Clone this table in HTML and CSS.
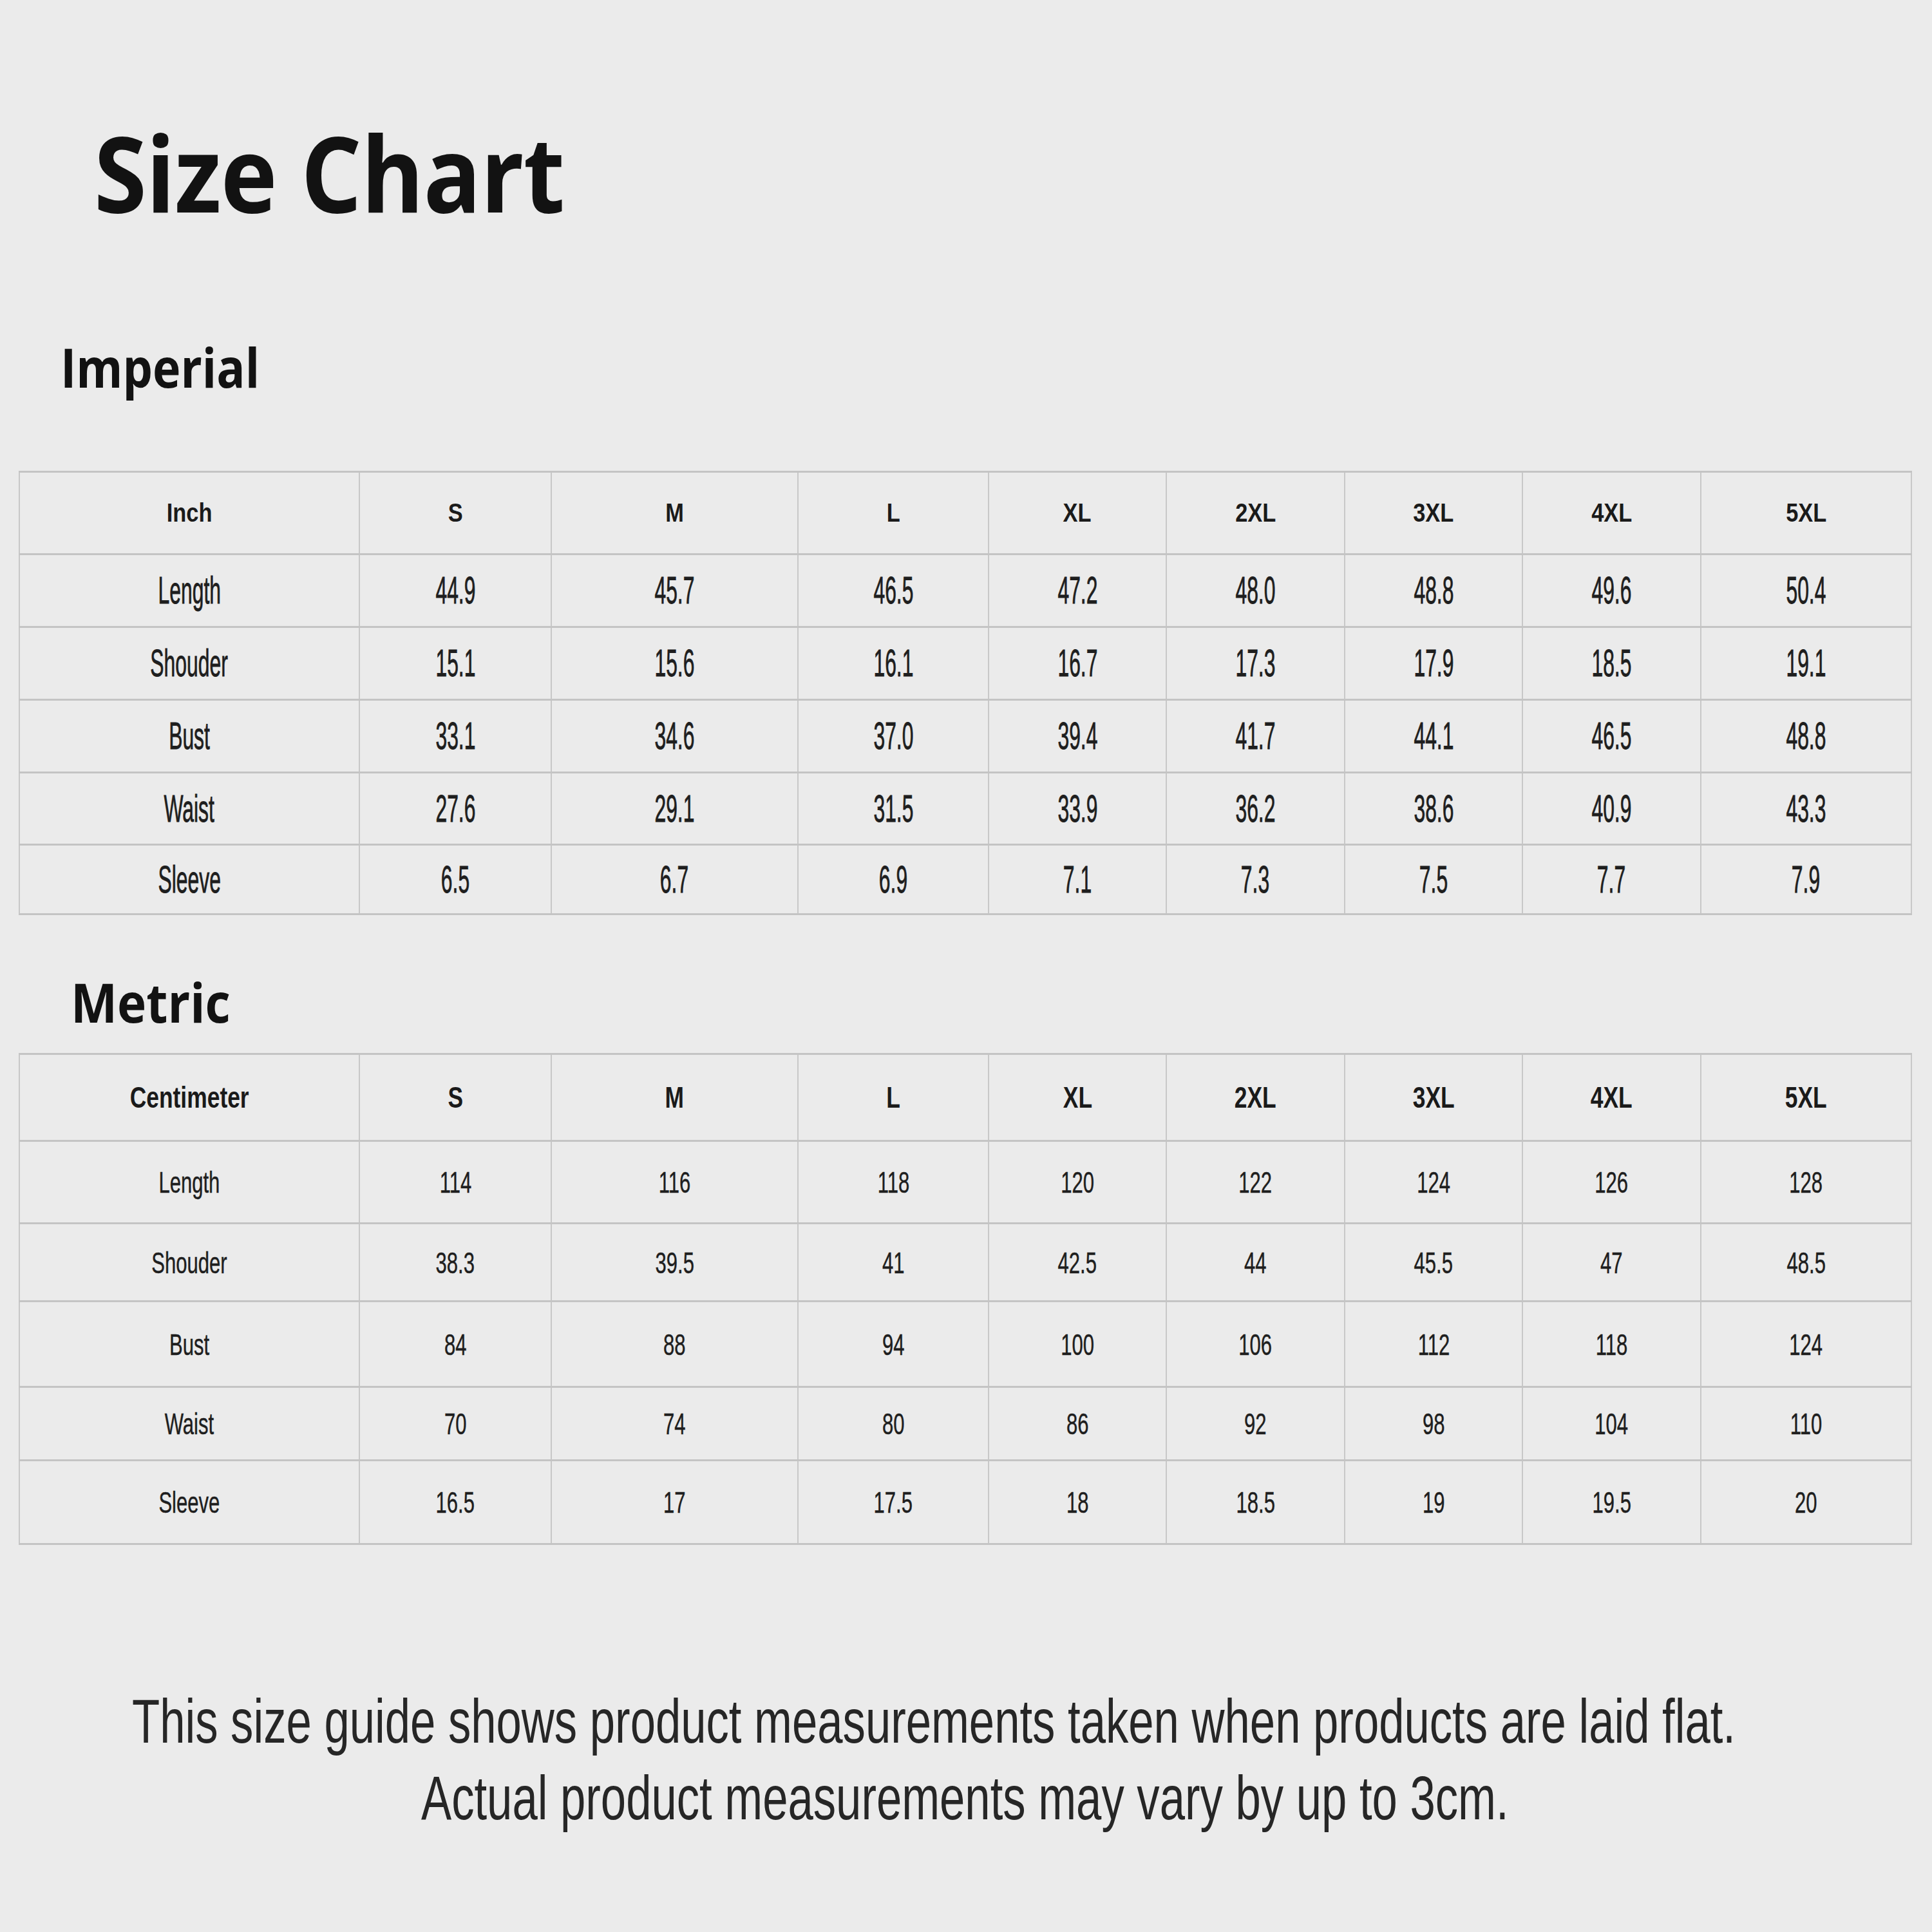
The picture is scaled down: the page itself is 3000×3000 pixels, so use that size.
FILE: index.html
```html
<!DOCTYPE html>
<html lang="en">
<head>
<meta charset="utf-8">
<title>Size Chart</title>
<link rel="stylesheet" href="styles.css">
</head>
<body>
<main class="page">
  <h1 class="title"><span>Size Chart</span></h1>

  <h2 class="section imperial"><span>Imperial</span></h2>
  <table class="chart chart-in">
    <colgroup>
      <col class="c0"><col class="c1"><col class="c2"><col class="c3"><col class="c4"><col class="c5"><col class="c6"><col class="c7"><col class="c8">
    </colgroup>
    <thead>
      <tr class="r-h">
        <th><span>Inch</span></th><th><span>S</span></th><th><span>M</span></th><th><span>L</span></th><th><span>XL</span></th><th><span>2XL</span></th><th><span>3XL</span></th><th><span>4XL</span></th><th><span>5XL</span></th>
      </tr>
    </thead>
    <tbody>
      <tr class="r1"><td><span>Length</span></td><td><span>44.9</span></td><td><span>45.7</span></td><td><span>46.5</span></td><td><span>47.2</span></td><td><span>48.0</span></td><td><span>48.8</span></td><td><span>49.6</span></td><td><span>50.4</span></td></tr>
      <tr class="r2"><td><span>Shouder</span></td><td><span>15.1</span></td><td><span>15.6</span></td><td><span>16.1</span></td><td><span>16.7</span></td><td><span>17.3</span></td><td><span>17.9</span></td><td><span>18.5</span></td><td><span>19.1</span></td></tr>
      <tr class="r3"><td><span>Bust</span></td><td><span>33.1</span></td><td><span>34.6</span></td><td><span>37.0</span></td><td><span>39.4</span></td><td><span>41.7</span></td><td><span>44.1</span></td><td><span>46.5</span></td><td><span>48.8</span></td></tr>
      <tr class="r4"><td><span>Waist</span></td><td><span>27.6</span></td><td><span>29.1</span></td><td><span>31.5</span></td><td><span>33.9</span></td><td><span>36.2</span></td><td><span>38.6</span></td><td><span>40.9</span></td><td><span>43.3</span></td></tr>
      <tr class="r5"><td><span>Sleeve</span></td><td><span>6.5</span></td><td><span>6.7</span></td><td><span>6.9</span></td><td><span>7.1</span></td><td><span>7.3</span></td><td><span>7.5</span></td><td><span>7.7</span></td><td><span>7.9</span></td></tr>
    </tbody>
  </table>

  <h2 class="section metric"><span>Metric</span></h2>
  <table class="chart chart-cm">
    <colgroup>
      <col class="c0"><col class="c1"><col class="c2"><col class="c3"><col class="c4"><col class="c5"><col class="c6"><col class="c7"><col class="c8">
    </colgroup>
    <thead>
      <tr class="r-h">
        <th><span>Centimeter</span></th><th><span>S</span></th><th><span>M</span></th><th><span>L</span></th><th><span>XL</span></th><th><span>2XL</span></th><th><span>3XL</span></th><th><span>4XL</span></th><th><span>5XL</span></th>
      </tr>
    </thead>
    <tbody>
      <tr class="r1"><td><span>Length</span></td><td><span>114</span></td><td><span>116</span></td><td><span>118</span></td><td><span>120</span></td><td><span>122</span></td><td><span>124</span></td><td><span>126</span></td><td><span>128</span></td></tr>
      <tr class="r2"><td><span>Shouder</span></td><td><span>38.3</span></td><td><span>39.5</span></td><td><span>41</span></td><td><span>42.5</span></td><td><span>44</span></td><td><span>45.5</span></td><td><span>47</span></td><td><span>48.5</span></td></tr>
      <tr class="r3"><td><span>Bust</span></td><td><span>84</span></td><td><span>88</span></td><td><span>94</span></td><td><span>100</span></td><td><span>106</span></td><td><span>112</span></td><td><span>118</span></td><td><span>124</span></td></tr>
      <tr class="r4"><td><span>Waist</span></td><td><span>70</span></td><td><span>74</span></td><td><span>80</span></td><td><span>86</span></td><td><span>92</span></td><td><span>98</span></td><td><span>104</span></td><td><span>110</span></td></tr>
      <tr class="r5"><td><span>Sleeve</span></td><td><span>16.5</span></td><td><span>17</span></td><td><span>17.5</span></td><td><span>18</span></td><td><span>18.5</span></td><td><span>19</span></td><td><span>19.5</span></td><td><span>20</span></td></tr>
    </tbody>
  </table>

  <div class="note">
    <p class="note-line l1"><span>This size guide shows product measurements taken when products are laid flat.</span></p>
    <p class="note-line l2"><span>Actual product measurements may vary by up to 3cm.</span></p>
  </div>
</main>
</body>
</html>
```

FILE: styles.css
```css
html, body {
  margin: 0;
  padding: 0;
  background: #ebebeb;
}

body {
  width: 3000px;
  height: 3000px;
  overflow: hidden;
  font-family: "Liberation Sans", Arial, sans-serif;
  color: #1c1c1c;
}

.page {
  display: flex;
  flex-direction: column;
  align-items: flex-start;
  padding-top: 185px;
}

.title {
  margin: 0 0 0 146px;
  font-family: "Open Sans", "Noto Sans", sans-serif;
  font-weight: 700;
  font-size: 164px;
  line-height: 1;
  color: #121212;
  letter-spacing: -1px;
}

.title span,
.section span {
  display: inline-block;
  transform-origin: 0 50%;
}

.title span { transform: scaleX(0.905); }

.section {
  margin: 0;
  font-family: "Open Sans", "Noto Sans", sans-serif;
  font-weight: 700;
  font-size: 84px;
  line-height: 1;
  color: #121212;
}

.imperial {
  margin-top: 179px;
  margin-left: 94px;
}
.imperial span { transform: scaleX(0.875); }

.metric {
  margin-top: 93px;
  margin-left: 110px;
}
.metric span { transform: scaleX(0.91); }

.chart {
  margin-left: 29px;
  width: 2938px;
  table-layout: fixed;
  border-collapse: collapse;
}

.chart-in { margin-top: 119px; }
.chart-cm { margin-top: 37px; }

.c0 { width: 528px; }
.c1 { width: 298px; }
.c2 { width: 383px; }
.c3 { width: 296px; }
.c4 { width: 276px; }
.c5 { width: 277px; }
.c6 { width: 276px; }
.c7 { width: 277px; }
.c8 { width: 327px; }

.chart th,
.chart td {
  padding: 0;
  text-align: center;
  vertical-align: middle;
  border-top: 3px solid #c4c4c4;
  border-bottom: 3px solid #c4c4c4;
  border-left: 2px solid #c8c8c8;
  border-right: 2px solid #c8c8c8;
  white-space: nowrap;
}

.chart span {
  display: inline-block;
  transform-origin: 50% 50%;
}

.chart th {
  font-weight: 700;
  color: #1a1a1a;
}

.chart td {
  font-weight: 400;
  color: #1e1e1e;
}

/* Imperial table */
.chart-in .r-h { height: 128px; }
.chart-in .r1, .chart-in .r2, .chart-in .r3 { height: 113px; }
.chart-in .r4 { height: 112px; }
.chart-in .r5 { height: 108px; }

.chart-in th { font-size: 40px; }
.chart-in th span { transform: scaleX(0.86); }
.chart-in td {
  font-size: 59px;
  -webkit-text-stroke: 0.9px #1e1e1e;
}
.chart-in td span { transform: scaleX(0.54); }

/* Metric table */
.chart-cm .r-h { height: 135px; }
.chart-cm .r1 { height: 128px; }
.chart-cm .r2 { height: 121px; }
.chart-cm .r3 { height: 133px; }
.chart-cm .r4 { height: 114px; }
.chart-cm .r5 { height: 130px; }

.chart-cm th { font-size: 46px; }
.chart-cm th span { transform: scaleX(0.77); }
.chart-cm td {
  font-size: 47px;
  -webkit-text-stroke: 0.5px #1e1e1e;
}
.chart-cm td span { transform: scaleX(0.66); }

/* Footer note: laid out at its condensed width, then stretched tall */
.note {
  margin-top: 215px;
  display: flex;
  flex-direction: column;
}

.note-line {
  margin: 0;
  height: 119px;
  font-size: 70.66px;
  color: #262626;
  white-space: nowrap;
}

.note-line span {
  display: block;
  line-height: 87.58px;
  transform: scaleY(1.3587);
  transform-origin: 0 0;
}

.l1 { margin-left: 205px; }
.l2 { margin-left: 654px; }
```
